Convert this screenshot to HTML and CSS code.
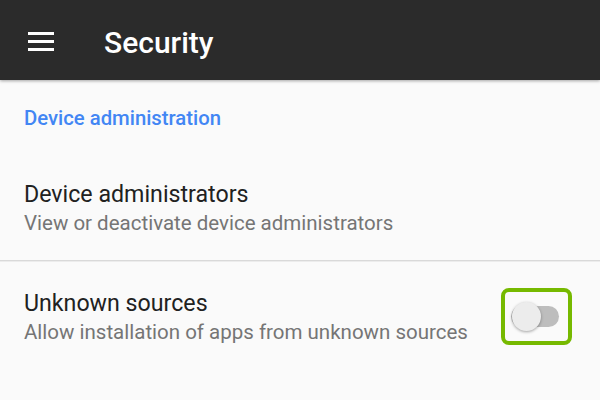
FILE: index.html
```html
<!DOCTYPE html>
<html>
<head>
<meta charset="utf-8">
<link rel="stylesheet" href="styles.css">
</head>
<body>
<div class="screen">
  <header class="toolbar">
    <svg class="menu-icon" width="26" height="20" viewBox="0 0 26 20">
      <rect x="0" y="0" width="26" height="3" fill="#fff"/>
      <rect x="0" y="8" width="26" height="3" fill="#fff"/>
      <rect x="0" y="16" width="26" height="3" fill="#fff"/>
    </svg>
    <h1 class="title">Security</h1>
  </header>
  <main class="content">
    <div class="category">Device administration</div>
    <div class="pref">
      <div class="pref-text">
        <div class="pref-title">Device administrators</div>
        <div class="pref-summary">View or deactivate device administrators</div>
      </div>
    </div>
    <div class="divider"></div>
    <div class="pref pref-switch">
      <div class="pref-text">
        <div class="pref-title">Unknown sources</div>
        <div class="pref-summary">Allow installation of apps from unknown sources</div>
      </div>
      <div class="highlight">
        <div class="switch">
          <div class="track"></div>
          <div class="thumb"></div>
        </div>
      </div>
    </div>
  </main>
</div>
</body>
</html>
```

FILE: styles.css
```css
html, body {
  margin: 0;
  padding: 0;
  background: #fafafa;
}
body {
  font-family: Roboto, "Noto Sans", sans-serif;
  width: 600px;
  height: 400px;
  overflow: hidden;
}
.screen {
  width: 600px;
  height: 400px;
  background: #fafafa;
}
.toolbar {
  height: 80px;
  background: #2b2b2b;
  display: flex;
  align-items: center;
  padding-left: 28px;
  box-sizing: border-box;
  box-shadow: 0 1px 3px rgba(0,0,0,0.35);
  position: relative;
}
.menu-icon {
  display: block;
  margin-top: 3px;
}
.title {
  margin: 5px 0 0 50px;
  font-size: 30px;
  font-weight: 500;
  color: #ffffff;
  line-height: 36px;
}
.category {
  padding: 26px 24px 25px;
  font-size: 20.3px;
  line-height: 24px;
  font-weight: 500;
  color: #4286f4;
}
.pref {
  display: flex;
  align-items: center;
  padding: 25px 24px;
}
.pref-switch {
  padding-top: 26px;
  padding-bottom: 26px;
}
.pref-text {
  flex: 1;
}
.pref-title {
  font-size: 23.2px;
  line-height: 28px;
  color: #212121;
}
.pref-summary {
  margin-top: 3px;
  font-size: 20.5px;
  line-height: 24px;
  color: #757575;
}
.divider {
  height: 1px;
  background: #d9d9d9;
  border-bottom: 1px solid #ececec;
}
.highlight {
  border: 4px solid #76b900;
  border-radius: 8px;
  padding: 10px 9px 10px 6px;
  margin-right: 4px;
}
.switch {
  position: relative;
  width: 48px;
  height: 29px;
}
.track {
  position: absolute;
  left: 0;
  top: 4px;
  width: 48px;
  height: 21px;
  border-radius: 10.5px;
  background: #bdbdbd;
}
.thumb {
  position: absolute;
  left: 1px;
  top: 0;
  width: 29px;
  height: 29px;
  border-radius: 50%;
  background: #ececec;
  box-shadow: 0 1px 3px rgba(0,0,0,0.35);
}
```
